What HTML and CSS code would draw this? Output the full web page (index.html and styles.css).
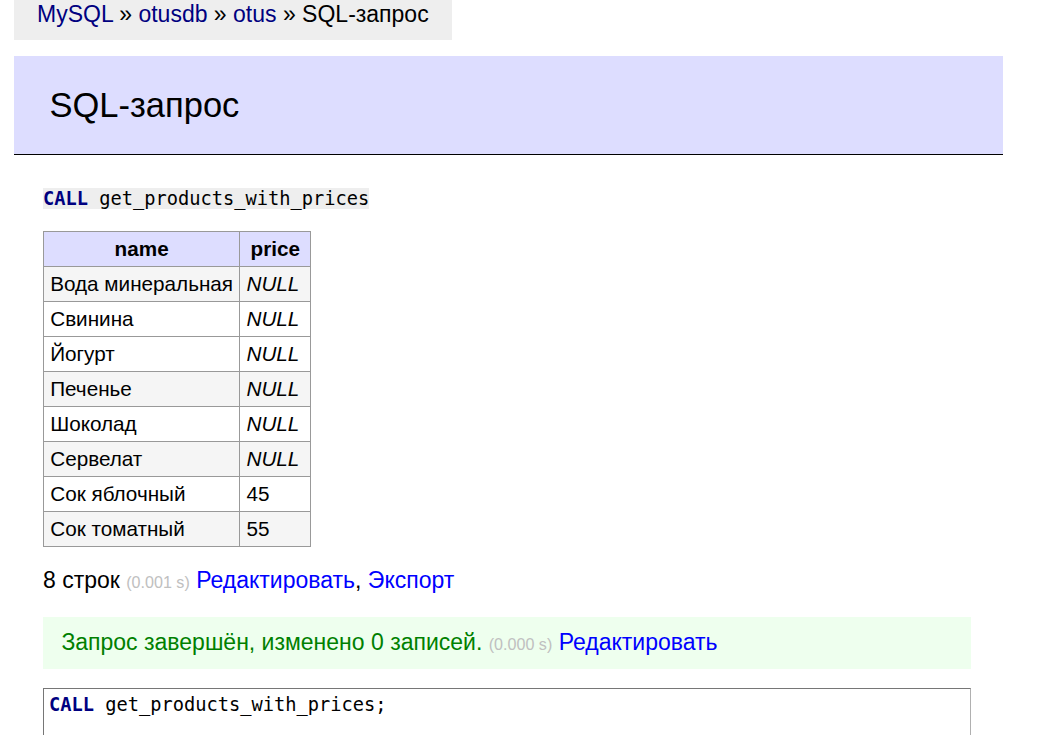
FILE: index.html
```html
<!DOCTYPE html>
<html lang="ru">
<head>
<meta charset="utf-8">
<title>SQL-запрос</title>
<link rel="stylesheet" href="styles.css">
</head>
<body>
<div class="page">
  <div class="breadcrumb"><a class="crumb" href="#">MySQL</a> » <a class="crumb" href="#">otusdb</a> » <a class="crumb" href="#">otus</a> » SQL-запрос</div>
  <h2 class="title">SQL-запрос</h2>
  <div class="content">
    <pre class="query"><code class="code"><span class="kw">CALL</span> get_products_with_prices</code></pre>
    <table class="grid">
      <thead>
        <tr><th class="head">name</th><th class="head">price</th></tr>
      </thead>
      <tbody>
        <tr class="odd"><td class="cell">Вода минеральная</td><td class="cell"><i>NULL</i></td></tr>
        <tr><td class="cell">Свинина</td><td class="cell"><i>NULL</i></td></tr>
        <tr><td class="cell">Йогурт</td><td class="cell"><i>NULL</i></td></tr>
        <tr class="odd"><td class="cell">Печенье</td><td class="cell"><i>NULL</i></td></tr>
        <tr><td class="cell">Шоколад</td><td class="cell"><i>NULL</i></td></tr>
        <tr class="odd"><td class="cell">Сервелат</td><td class="cell"><i>NULL</i></td></tr>
        <tr><td class="cell">Сок яблочный</td><td class="cell">45</td></tr>
        <tr class="odd"><td class="cell">Сок томатный</td><td class="cell">55</td></tr>
      </tbody>
    </table>
    <p class="rows">8 строк <span class="time">(0.001 s)</span> <a class="action" href="#">Редактировать</a>, <a class="action" href="#">Экспорт</a></p>
    <div class="message">Запрос завершён, изменено 0 записей. <span class="time">(0.000 s)</span> <a class="action" href="#">Редактировать</a></div>
    <div class="sqlarea"><span class="kw">CALL</span> get_products_with_prices;</div>
  </div>
</div>
</body>
</html>
```

FILE: styles.css
```css
html, body {
  margin: 0;
  padding: 0;
  background: #fff;
}

body {
  color: #000;
  font-family: "Liberation Sans", Arial, sans-serif;
  font-size: 23px;
  line-height: 1.25;
  overflow: hidden;
}

.page {
  width: 1003px;
}

.breadcrumb {
  display: inline-block;
  margin-left: 14px;
  height: 40px;
  line-height: 28px;
  padding: 0 23px;
  background: #eee;
  white-space: nowrap;
  vertical-align: top;
}

.crumb {
  color: #000080;
  text-decoration: none;
}

.title {
  box-sizing: border-box;
  width: 989px;
  margin: 16px 0 32px 14px;
  padding: 27.6px 34.5px 27.6px 35.5px;
  font-size: 34.5px;
  line-height: 1.25;
  font-weight: normal;
  background: #ddf;
  border-bottom: 1px solid #000;
}

.content {
  padding-left: 43px;
}

.query {
  margin: 0 0 20.5px;
  font-family: "DejaVu Sans Mono", monospace;
  font-size: 18.7px;
  line-height: 1.25;
}

.code {
  background: #eee;
}

.kw {
  color: #000080;
  font-weight: bold;
}

.grid {
  border-collapse: separate;
  border-spacing: 0;
  border-top: 1px solid #999;
  border-left: 1px solid #999;
  font-size: 20.7px;
  line-height: 26px;
  margin: 0;
}

.head {
  background: #ddf;
  text-align: center;
  font-weight: bold;
  padding: 4px 10.35px;
  border-right: 1px solid #999;
  border-bottom: 1px solid #999;
  white-space: nowrap;
}

.cell {
  padding: 3.5px 6.2px 4.5px;
  border-right: 1px solid #999;
  border-bottom: 1px solid #999;
  white-space: nowrap;
}

.odd .cell {
  background: #f5f5f5;
}

.rows {
  margin: 19px 0 0;
}

.time {
  color: #c0c0c0;
  font-size: 16.1px;
}

.action {
  color: #00f;
  text-decoration: none;
}

.message {
  margin: 22px 32px 19px 0;
  padding: 11.5px 18.4px;
  background: #efe;
  color: #008000;
}

.sqlarea {
  box-sizing: border-box;
  margin-right: 32px;
  height: 200px;
  padding: 4px 5px;
  border: 1px solid #767676;
  border-right-color: #b0b0b0;
  font-family: "DejaVu Sans Mono", monospace;
  font-size: 18.7px;
  line-height: 1.25;
}
```
